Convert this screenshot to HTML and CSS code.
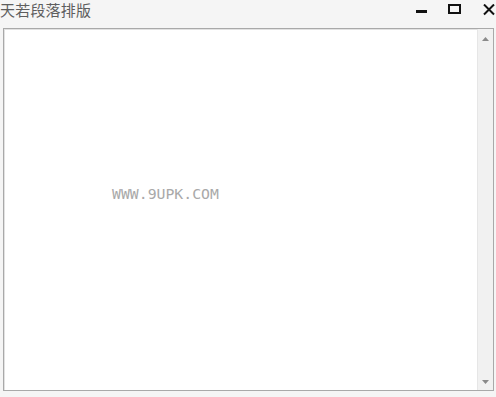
FILE: index.html
```html
<!DOCTYPE html>
<html lang="zh">
<head>
<meta charset="utf-8">
<title>天若段落排版</title>
<link rel="stylesheet" href="styles.css">
</head>
<body>
<div class="window">
  <div class="titlebar">
    <div class="title">天若段落排版</div>
    <div class="controls">
      <span class="btn btn-min"><svg width="12" height="12" viewBox="0 0 12 12"><rect x="1" y="6" width="11" height="3" fill="#111"/></svg></span>
      <span class="btn btn-max"><svg width="13" height="12" viewBox="0 0 13 12"><rect x="1" y="1" width="11" height="8" fill="none" stroke="#111" stroke-width="2"/></svg></span>
      <span class="btn btn-close"><svg width="12" height="12" viewBox="0 0 12 12"><path d="M1 0.5 L11 10.5 M11 0.5 L1 10.5" stroke="#111" stroke-width="2" fill="none"/></svg></span>
    </div>
  </div>
  <div class="editor">
    <div class="text-area"></div>
    <div class="scrollbar">
      <span class="arrow"><svg width="9" height="6" viewBox="0 0 9 6"><path d="M4.5 1 L8 5 L1 5 Z" fill="#8a8a8a"/></svg></span>
      <span class="arrow"><svg width="9" height="6" viewBox="0 0 9 6"><path d="M1 1 L8 1 L4.5 5 Z" fill="#8a8a8a"/></svg></span>
    </div>
    <div class="watermark">WWW.9UPK.COM</div>
  </div>
</div>
</body>
</html>
```
FILE: styles.css
```css
html, body {
  margin: 0;
  padding: 0;
  background: #f5f5f5;
}
.window {
  width: 496px;
  height: 397px;
  display: flex;
  flex-direction: column;
}
.titlebar {
  height: 28px;
  display: flex;
  align-items: flex-start;
  justify-content: space-between;
}
.title {
  font-family: "Noto Sans CJK SC", sans-serif;
  font-size: 15px;
  line-height: 20px;
  color: #5e5e5e;
  letter-spacing: 0.2px;
}
.controls {
  display: flex;
  margin-top: 4px;
}
.btn {
  display: block;
  height: 12px;
}
.btn svg { display: block; }
.btn-min { margin-right: 21px; }
.btn-max { margin-right: 22px; }
.btn-close { margin-right: 1px; }
.editor {
  position: relative;
  margin-left: 3px;
  width: 489px;
  height: 361px;
  border: 1px solid #a9a9a9;
  background: #fff;
  display: flex;
}
.text-area {
  flex: 1;
  border-left: 1px solid #e2e2e2;
  border-top: 1px solid #e2e2e2;
}
.scrollbar {
  width: 15px;
  background: #f1f1f1;
  border-left: 1px solid #e6e6e6;
  display: flex;
  flex-direction: column;
  justify-content: space-between;
  align-items: center;
  padding: 7px 0 5px;
}
.arrow svg { display: block; }
.watermark {
  position: absolute;
  left: 108px;
  top: 156px;
  font-family: "DejaVu Sans Mono", monospace;
  font-size: 14.8px;
  color: #a9a9a9;
}
```
